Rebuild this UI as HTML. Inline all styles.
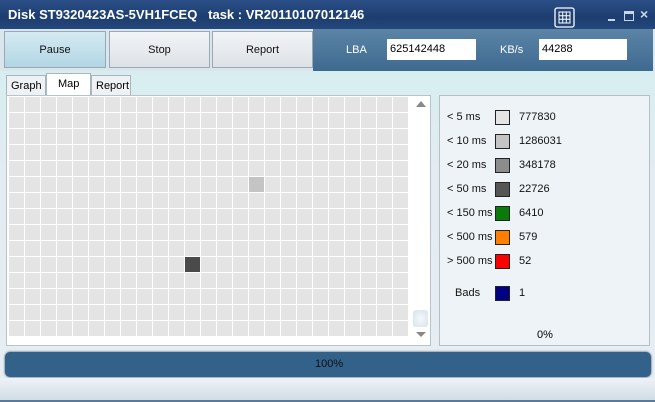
<!DOCTYPE html>
<html><head><meta charset="utf-8"><style>
*{margin:0;padding:0;box-sizing:border-box}
body{width:655px;height:402px;overflow:hidden;font-family:"Liberation Sans",sans-serif;font-size:11px;position:relative;background:#dde9f0}
.abs{position:absolute}
#title{left:0;top:0;width:655px;height:29px;background:linear-gradient(#2a4f86,#1d3d70 60%,#24477c);color:#fff;font-size:13px;font-weight:bold}
#toolbar{left:313px;top:29px;width:340px;height:42px;background:linear-gradient(#5b84a6,#3f6a90)}
.btn{top:31px;height:37px;border:1px solid #9aa8b5;background:linear-gradient(#f2f4f6,#dde2e7);text-align:center;line-height:37px;font-size:11px;color:#111}
.inp{background:#fff;height:21px;top:39px;font-size:11px;line-height:21px;padding-left:3px;color:#000}
.tab{top:75px;height:20px;border:1px solid #a9b4bd;border-bottom:none;background:#eef2f4;font-size:11px;line-height:20px;padding-left:4px;color:#000}
#map{left:6px;top:95px;width:425px;height:251px;background:#fff;border:1px solid #b8c2ca}
#leg{left:439px;top:95px;width:211px;height:251px;background:#eef3f7;border:1px solid #b5bfc7}
.lb{left:447px;font-size:11px;color:#111}
.sw{left:495px;width:15px;height:15px;border:1px solid #222}
.vl{left:519px;font-size:11px;color:#111}
</style></head><body>
<div id="title" class="abs"><span class="abs" style="left:8px;top:7px">Disk ST9320423AS-5VH1FCEQ&nbsp;&nbsp;&nbsp;task : VR20110107012146</span>
<svg class="abs" style="left:554px;top:7px" width="21" height="21"><rect x="1" y="1" width="19" height="19" rx="2" fill="none" stroke="#fff" stroke-width="1.3"/><rect x="5" y="5" width="11" height="11" fill="none" stroke="#fff"/><path d="M5 8.7H16M5 12.3H16M8.7 5V16M12.3 5V16" stroke="#fff"/></svg>
<div class="abs" style="left:608px;top:19px;width:7px;height:2px;background:#c8d6e6"></div>
<div class="abs" style="left:624px;top:11px;width:10px;height:10px;border:1px solid #c8d6e6;border-top:3px solid #c8d6e6"></div>
<span class="abs" style="left:640px;top:6px;font-size:14px;color:#c8d6e6">×</span>
</div>
<div id="toolbar" class="abs"></div>
<div class="abs" style="left:0;top:29px;width:313px;height:42px;background:#dbe6ec"></div>
<div class="btn abs" style="left:4px;width:102px;background:linear-gradient(#d5eaf2,#b2d6e4)">Pause</div>
<div class="btn abs" style="left:109px;width:101px">Stop</div>
<div class="btn abs" style="left:212px;width:101px">Report</div>
<span class="abs" style="left:346px;top:44px;color:#fff">LBA</span>
<div class="inp abs" style="left:387px;width:89px">625142448</div>
<span class="abs" style="left:500px;top:44px;color:#fff">KB/s</span>
<div class="inp abs" style="left:539px;width:88px">44288</div>
<div class="abs" style="left:0;top:71px;width:655px;height:331px;background:linear-gradient(#d7eef0,#e2ecf2 30%,#e7eef3)"></div>
<div class="tab abs" style="left:6px;width:40px">Graph</div>
<div class="tab abs" style="left:46px;top:73px;height:22px;width:45px;background:#fff;padding-left:11px">Map</div>
<div class="tab abs" style="left:91px;width:40px">Report</div>
<div id="map" class="abs"></div>
<svg class="abs" style="left:9px;top:97px" width="400" height="240">
<defs><pattern id="p" width="16" height="16" patternUnits="userSpaceOnUse"><rect width="15" height="15" fill="#e4e4e4"/></pattern></defs>
<rect width="400" height="240" fill="url(#p)"/>
<rect x="240" y="80" width="15" height="15" fill="#c4c4c4"/>
<rect x="176" y="160" width="15" height="15" fill="#4a4a4a"/>
</svg>
<div class="abs" style="left:416px;top:101px;width:0;height:0;border-left:5px solid transparent;border-right:5px solid transparent;border-bottom:6px solid #888"></div>
<div class="abs" style="left:413px;top:310px;width:15px;height:17px;background:radial-gradient(#f4f8fb,#d8e2ea);border-radius:3px"></div>
<div class="abs" style="left:416px;top:332px;width:0;height:0;border-left:5px solid transparent;border-right:5px solid transparent;border-top:5px solid #888"></div>
<div id="leg" class="abs"></div>
<span class="lb abs" style="top:111px">&lt; 5 ms</span><div class="sw abs" style="top:110px;background:#e4e4e4"></div><span class="vl abs" style="top:111px">777830</span>
<span class="lb abs" style="top:135px">&lt; 10 ms</span><div class="sw abs" style="top:134px;background:#c4c4c4"></div><span class="vl abs" style="top:135px">1286031</span>
<span class="lb abs" style="top:159px">&lt; 20 ms</span><div class="sw abs" style="top:158px;background:#8c8c8c"></div><span class="vl abs" style="top:159px">348178</span>
<span class="lb abs" style="top:183px">&lt; 50 ms</span><div class="sw abs" style="top:182px;background:#555"></div><span class="vl abs" style="top:183px">22726</span>
<span class="lb abs" style="top:207px">&lt; 150 ms</span><div class="sw abs" style="top:206px;background:#0a7a0a"></div><span class="vl abs" style="top:207px">6410</span>
<span class="lb abs" style="top:231px">&lt; 500 ms</span><div class="sw abs" style="top:230px;background:#ff8000"></div><span class="vl abs" style="top:231px">579</span>
<span class="lb abs" style="top:255px">&gt; 500 ms</span><div class="sw abs" style="top:254px;background:#f00"></div><span class="vl abs" style="top:255px">52</span>
<span class="lb abs" style="top:287px;left:455px">Bads</span><div class="sw abs" style="top:286px;background:#000080"></div><span class="vl abs" style="top:287px">1</span>
<span class="abs" style="left:537px;top:329px">0%</span>
<div class="abs" style="left:5px;top:352px;width:646px;height:25px;border-radius:5px;background:#32618a;box-shadow:0 0 2px #345"></div>
<span class="abs" style="left:315px;top:358px;color:#111">100%</span>
<div class="abs" style="left:0;top:378px;width:655px;height:24px;background:linear-gradient(#eef3f7,#cfdae3)"></div>
<div class="abs" style="left:0;top:400px;width:655px;height:2px;background:#5a7a9a"></div>
</body></html>
